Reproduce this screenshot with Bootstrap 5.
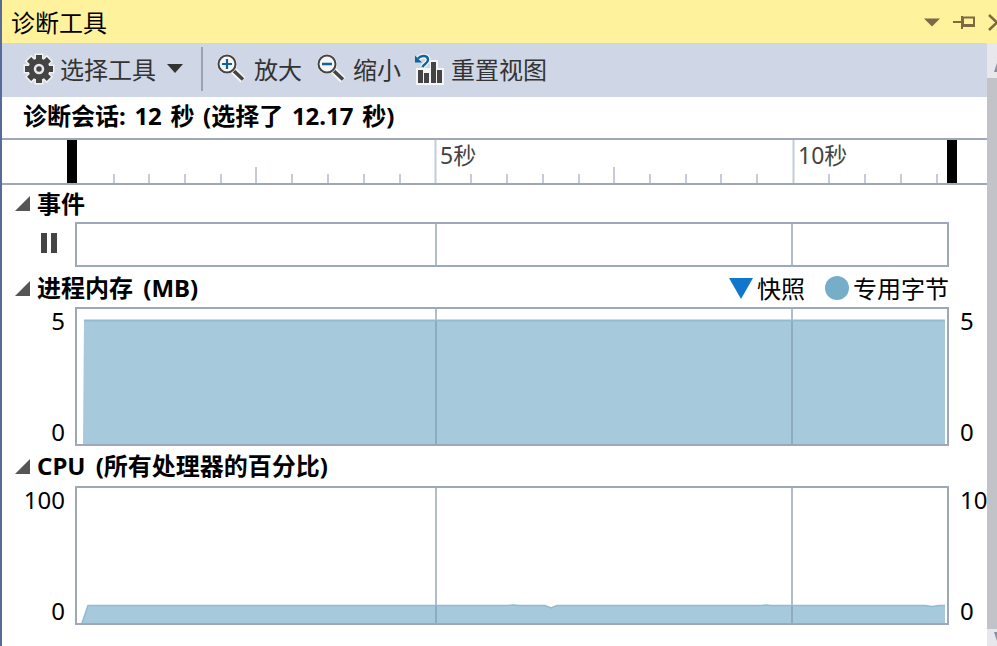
<!DOCTYPE html>
<html lang="zh">
<head>
<meta charset="utf-8">
<title>诊断工具</title>
<link href="https://cdn.jsdelivr.net/npm/bootstrap@5.3.0/dist/css/bootstrap.min.css" rel="stylesheet">
<style>
html,body{height:100%;margin:0;overflow:hidden;background:#fff}
body{font-family:"Noto Sans","Noto Sans CJK SC",sans-serif;color:#000;font-size:24px;line-height:1}
.shell{width:997px;height:646px;border-left:2px solid #5a6a98;overflow:hidden}
.titlebar{height:43px;background:#fff29d;padding-left:9px;overflow:hidden;font-family:"Noto Sans CJK SC",sans-serif;font-size:24px}
.titlebar .tools{width:73px;flex:none}
.bodyrow{height:603px}
.pane{width:985px;flex:none;overflow:hidden}
.scroll-track{width:10px;flex:none;background:#c2c3c9}
.scroll-top{height:35px;background:#e8e8ec}
.scroll-foot{height:17px;background:#e8e8ec}
.scroll-top svg,.scroll-foot svg{display:block}
.toolbar{height:54px;background:#cfd6e5;padding-left:21px;padding-bottom:2px;color:#333;font-family:"Noto Sans CJK SC",sans-serif}
.tb-gear{margin-right:5px}
.tb-caret{margin-left:11px}
.tb-sep{width:2px;height:44px;background:#9aa3b3;margin:0 13px 0 18px}
.tb-gap-a{margin-left:8px}
.tb-gap-b{margin-left:14px}
.tb-gap-c{margin-left:7px}
.tb-gap-d{margin-left:13px}
.session{height:41px;padding-left:21px;padding-bottom:3px;font-weight:700;font-size:24px;word-spacing:2.4px;white-space:nowrap}
.ruler{height:47px;border-top:2px solid #9ea8b8;border-bottom:2px solid #9ea8b8}
.ruler svg,.plot svg{display:block}
.sect-head{font-weight:700;padding-left:13px;white-space:nowrap;word-spacing:4px}
.sect-head .tri{width:16px;height:15px;margin-right:6px;flex:none}
.h-events{height:37px}
.h-mem{height:40px;padding-top:2px}
.h-cpu{height:40px}
.legend{font-weight:400;font-size:24px;font-family:"Noto Sans CJK SC",sans-serif;padding-right:38px}
.legend-dot{margin-left:20px}
.chartrow{height:139px}
.evrow{height:45px}
.axis{width:73px;flex:none;padding-right:10px;text-align:right;font-size:24px;padding-top:2px;padding-bottom:2px}
.axis-r{width:38px;flex:none;text-align:left;padding-left:11px;padding-right:0;white-space:nowrap}
.plot{width:874px;flex:none;overflow:hidden}
.pause{width:73px;flex:none;padding-left:39px;padding-top:11px}
</style>
</head>
<body>
<div class="shell d-flex flex-column">
  <div class="titlebar d-flex align-items-center justify-content-between flex-shrink-0">
    <span>诊断工具</span>
    <svg class="tools" width="73" height="30" viewBox="0 0 73 30">
      <path d="M0 11.500h16l-8 8z" fill="#7b6a42"/>
      <path d="M29 15h9" stroke="#7b6a42" stroke-width="2"/>
      <path d="M38 9v13" stroke="#7b6a42" stroke-width="2"/>
      <path d="M39 10.500h11v8H39z" fill="none" stroke="#7b6a42" stroke-width="2"/>
      <path d="M39 17h12v3H39z" fill="#7b6a42"/>
      <path d="M65 8l8 7.500-8 7.500" fill="none" stroke="#7b6a42" stroke-width="2.500"/>
    </svg>
  </div>
  <div class="bodyrow d-flex">
    <div class="pane d-flex flex-column">
      <div class="toolbar d-flex align-items-center flex-shrink-0">
        <svg width="32" height="32" viewBox="-16 -16 32 32" class="tb-gear flex-shrink-0">
          <defs>
            <g id="gearshape">
              <circle r="10.500"/>
              <rect x="-3" y="-14" width="6" height="6"/>
              <rect x="-3" y="-14" width="6" height="6" transform="rotate(45)"/>
              <rect x="-3" y="-14" width="6" height="6" transform="rotate(90)"/>
              <rect x="-3" y="-14" width="6" height="6" transform="rotate(135)"/>
              <rect x="-3" y="-14" width="6" height="6" transform="rotate(180)"/>
              <rect x="-3" y="-14" width="6" height="6" transform="rotate(225)"/>
              <rect x="-3" y="-14" width="6" height="6" transform="rotate(270)"/>
              <rect x="-3" y="-14" width="6" height="6" transform="rotate(315)"/>
            </g>
          </defs>
          <use href="#gearshape" fill="#f2f2f2" stroke="#f2f2f2" stroke-width="3"/>
          <use href="#gearshape" fill="#444"/>
          <circle r="4" fill="none" stroke="#e8e8ee" stroke-width="2.500"/>
        </svg>
        <span>选择工具</span>
        <svg width="16" height="10" viewBox="0 0 16 10" class="tb-caret flex-shrink-0"><path d="M0 0h16l-8 9z" fill="#333"/></svg>
        <div class="tb-sep flex-shrink-0"></div>
        <svg width="30" height="32" viewBox="0 0 30 32" class="flex-shrink-0">
          <path d="M18 18l9 9" stroke="#f5f5f5" stroke-width="7"/><path d="M18 18l9 8.500" stroke="#444" stroke-width="3.500"/>
          <circle cx="11" cy="11" r="10" fill="#f5f5f5"/>
          <circle cx="11" cy="11" r="8.500" fill="#f5f5f5" stroke="#444" stroke-width="2"/>
          <path d="M11 6v10M6 11h10" stroke="#0e639c" stroke-width="2.200"/>
        </svg>
        <span class="tb-gap-a">放大</span>
        <svg width="30" height="32" viewBox="0 0 30 32" class="tb-gap-b flex-shrink-0">
          <path d="M18 18l9 9" stroke="#f5f5f5" stroke-width="7"/><path d="M18 18l9 8.500" stroke="#444" stroke-width="3.500"/>
          <circle cx="11" cy="11" r="10" fill="#f5f5f5"/>
          <circle cx="11" cy="11" r="8.500" fill="#f5f5f5" stroke="#444" stroke-width="2"/>
          <path d="M6 11h10" stroke="#0e639c" stroke-width="2.500"/>
        </svg>
        <span class="tb-gap-c">缩小</span>
        <svg width="30" height="34" viewBox="0 0 30 34" class="tb-gap-d flex-shrink-0">
          <path d="M2 16h14v-8h8v8h6v17H2z" fill="#f5f5f5"/>
          <path d="M4 7C7 3 14 3 14 8C14 11 10 12 8.500 15" fill="none" stroke="#f5f5f5" stroke-width="5"/>
          <path d="M4 6.500C7 3 14 3 14 8C14 11 10 12 8.500 15" fill="none" stroke="#0e639c" stroke-width="2.400"/>
          <path d="M1 3.500v7h7z" fill="#0e639c"/>
          <rect x="4" y="18" width="5" height="13" fill="#444"/>
          <rect x="10" y="21" width="5" height="10" fill="#444"/>
          <rect x="17" y="10" width="5" height="21" fill="#444"/>
          <rect x="23" y="18" width="5" height="13" fill="#444"/>
        </svg>
        <span class="tb-gap-c">重置视图</span>
      </div>
      <div class="session d-flex align-items-center flex-shrink-0">诊断会话: 12 秒 (选择了 12.17 秒)</div>
      <div class="ruler flex-shrink-0">
        <svg width="985" height="43" viewBox="0 0 985 43" font-family="'Noto Sans','Noto Sans CJK SC',sans-serif" font-size="23" fill="#444">
          <g stroke="#c4ccd9" stroke-width="2">
            <path d="M112 34v9M147 34v9M183 34v9M219 34v9M290 34v9M326 34v9M362 34v9M398 34v9M469 34v9M505 34v9M541 34v9M577 34v9M648 34v9M684 34v9M719 34v9M755 34v9M827 34v9M863 34v9M899 34v9M935 34v9"/>
            <path d="M254 27v16M612 27v16M433.500 0v43M791.500 0v43"/>
          </g>
          <rect x="65" y="0" width="10" height="43" fill="#000"/>
          <rect x="945" y="0" width="10" height="43" fill="#000"/>
          <text x="438" y="24">5秒</text>
          <text x="796" y="24">10秒</text>
        </svg>
      </div>
      <div class="sect-head h-events d-flex align-items-center flex-shrink-0">
        <svg class="tri" viewBox="0 0 16 15"><path d="M15 0v15H0z" fill="#555"/></svg>事件
      </div>
      <div class="evrow d-flex flex-shrink-0">
        <div class="pause"><svg width="16" height="20" viewBox="0 0 16 20" class="d-block"><path d="M0 0h6v20H0zM10 0h6v20h-6z" fill="#444"/></svg></div>
        <div class="plot">
          <svg width="874" height="45" viewBox="0 0 874 45">
            <rect x="1" y="1" width="872" height="43" fill="#fff" stroke="#9ea8b8" stroke-width="2"/>
            <path d="M361 2v41M717 2v41" stroke="#b3bccb" stroke-width="2"/>
          </svg>
        </div>
      </div>
      <div class="sect-head h-mem d-flex align-items-center justify-content-between flex-shrink-0">
        <span class="d-flex align-items-center"><svg class="tri" viewBox="0 0 16 15"><path d="M15 0v15H0z" fill="#555"/></svg>进程内存 (MB)</span>
        <span class="legend d-flex align-items-center">
          <svg width="24" height="21" viewBox="0 0 24 21" class="me-1 flex-shrink-0"><path d="M0 0h24L12 21z" fill="#1177cc"/></svg>快照
          <svg width="24" height="24" viewBox="0 0 24 24" class="legend-dot me-1 flex-shrink-0"><circle cx="12" cy="12" r="12" fill="#76aeca"/></svg>专用字节
        </span>
      </div>
      <div class="chartrow d-flex flex-shrink-0">
        <div class="axis d-flex flex-column justify-content-between"><span>5</span><span>0</span></div>
        <div class="plot">
          <svg width="874" height="139" viewBox="0 0 874 139">
            <rect x="1" y="1" width="872" height="137" fill="#fff" stroke="#9ea8b8" stroke-width="2"/>
            <path d="M8 137L9 13.500H870V137z" fill="#a6c9dc"/>
            <path d="M9 13.500H870" stroke="#92bbcf" stroke-width="2"/>
            <path d="M361 14v123M717 14v123" stroke="#8eabc2" stroke-width="2"/>
            <path d="M361 2v11M717 2v11" stroke="#b3bccb" stroke-width="2"/>
          </svg>
        </div>
        <div class="axis axis-r d-flex flex-column justify-content-between"><span>5</span><span>0</span></div>
      </div>
      <div class="sect-head h-cpu d-flex align-items-center flex-shrink-0">
        <svg class="tri" viewBox="0 0 16 15"><path d="M15 0v15H0z" fill="#555"/></svg>CPU (所有处理器的百分比)
      </div>
      <div class="chartrow d-flex flex-shrink-0">
        <div class="axis d-flex flex-column justify-content-between"><span>100</span><span>0</span></div>
        <div class="plot">
          <svg width="874" height="139" viewBox="0 0 874 139">
            <rect x="1" y="1" width="872" height="137" fill="#fff" stroke="#9ea8b8" stroke-width="2"/>
            <path d="M361 2v117M717 2v117" stroke="#b3bccb" stroke-width="2"/>
            <path d="M7 137L13 119.500H432L438 119L444 119.500H470L476 122L482 119.500H686L691 119L696 119.500H850L857 120.500L864 119.500H870V137z" fill="#a6c9dc"/>
            <path d="M7 137L13 119.500H432L438 119L444 119.500H470L476 122L482 119.500H686L691 119L696 119.500H850L857 120.500L864 119.500H870" fill="none" stroke="#92bbcf" stroke-width="1.500"/>
            <path d="M361 120v17M717 120v17" stroke="#8eabc2" stroke-width="2"/>
          </svg>
        </div>
        <div class="axis axis-r d-flex flex-column justify-content-between"><span>100</span><span>0</span></div>
      </div>
    </div>
    <div class="scroll-track d-flex flex-column justify-content-between">
      <div class="scroll-top"><svg width="10" height="35" viewBox="0 0 10 35"><path d="M7 29L10 20V29z" fill="#8a8fa3"/></svg></div>
      <div class="scroll-foot"><svg width="10" height="17" viewBox="0 0 10 17"><path d="M7 3L10 12V3z" fill="#8a8fa3"/></svg></div>
    </div>
  </div>
</div>
<script src="https://cdn.jsdelivr.net/npm/bootstrap@5.3.0/dist/js/bootstrap.bundle.min.js"></script>
</body>
</html>
